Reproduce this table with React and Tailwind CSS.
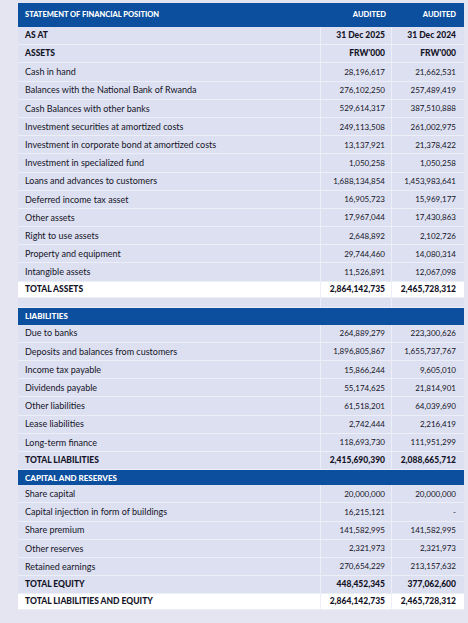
const assets = [
  ["Cash in hand", "28,196,617", "21,662,531"],
  ["Balances with the National Bank of Rwanda", "276,102,250", "257,489,419"],
  ["Cash Balances with other banks", "529,614,317", "387,510,888"],
  ["Investment securities at amortized costs", "249,113,508", "261,002,975"],
  ["Investment in corporate bond at amortized costs", "13,137,921", "21,378,422"],
  ["Investment in specialized fund", "1,050,258", "1,050,258"],
  ["Loans and advances to customers", "1,688,134,854", "1,453,983,641"],
  ["Deferred income tax asset", "16,905,723", "15,969,177"],
  ["Other assets", "17,967,044", "17,430,863"],
  ["Right to use assets", "2,648,892", "2,102,726"],
  ["Property and equipment", "29,744,460", "14,080,314"],
  ["Intangible assets", "11,526,891", "12,067,098"],
];

const liabilities = [
  ["Due to banks", "264,889,279", "223,300,626"],
  ["Deposits and balances from customers", "1,896,805,867", "1,655,737,767"],
  ["Income tax payable", "15,866,244", "9,605,010"],
  ["Dividends payable", "55,174,625", "21,814,901"],
  ["Other liabilities", "61,518,201", "64,039,690"],
  ["Lease liabilities", "2,742,444", "2,216,419"],
  ["Long-term finance", "118,693,730", "111,951,299"],
];

const capital = [
  ["Share capital", "20,000,000", "20,000,000"],
  ["Capital injection in form of buildings", "16,215,121", "-"],
  ["Share premium", "141,582,995", "141,582,995"],
  ["Other reserves", "2,321,973", "2,321,973"],
  ["Retained earnings", "270,654,229", "213,157,632"],
];

const cols = "grid grid-cols-[303px_71px_72px]";

function Row({ label, a, b, bold, white, h = "h-[18.2px]" }) {
  return (
    <div
      className={`${cols} ${h} ${white ? "bg-white" : ""} border-b border-[#eceef8] text-[#141428] ${bold ? "font-black text-[8.5px]" : "text-[8px]"}`}
    >
      <div className={`flex items-center pl-[7px] border-r border-[#eceef8] ${bold ? "" : "text-[9px]"}`}>{label}</div>
      <div className="flex items-center justify-end pr-[6px] border-r border-[#eceef8]">{a}</div>
      <div className="flex items-center justify-end pr-[8px]">{b}</div>
    </div>
  );
}

function SectionHead({ title, h }) {
  return (
    <div className={`${h} bg-[#0b4f9e] flex items-center pl-[7px] text-[8px] font-black text-white`}>
      {title}
    </div>
  );
}

export default function App() {
  return (
    <div
      className="min-h-[623px] w-[468px] bg-[#e4e5f1] pt-[3px] pl-[18px]"
      style={{ fontFamily: "Lato, 'Open Sans', sans-serif" }}
    >
      <div className="w-[446px] bg-[#dde0f0]">
        <div className={`${cols} h-[24px] bg-[#0b4f9e] text-[7.5px] font-black text-white`}>
          <div className="flex items-center pl-[7px]">STATEMENT OF FINANCIAL POSITION</div>
          <div className="flex items-center justify-end pr-[6px]">AUDITED</div>
          <div className="flex items-center justify-end pr-[8px]">AUDITED</div>
        </div>
        <Row label="AS AT" a="31 Dec 2025" b="31 Dec 2024" bold />
        <Row label="ASSETS" a="FRW'000" b="FRW'000" bold />
        {assets.map((r) => (
          <Row key={r[0]} label={r[0]} a={r[1]} b={r[2]} />
        ))}
        <Row label="TOTAL ASSETS" a="2,864,142,735" b="2,465,728,312" bold white h="h-[16px]" />
        <Row label="" a="" b="" h="h-[10px]" />
        <SectionHead title="LIABILITIES" h="h-[17px]" />
        {liabilities.map((r) => (
          <Row key={r[0]} label={r[0]} a={r[1]} b={r[2]} />
        ))}
        <Row label="TOTAL LIABILITIES" a="2,415,690,390" b="2,088,665,712" bold />
        <SectionHead title="CAPITAL AND RESERVES" h="h-[15px]" />
        {capital.map((r) => (
          <Row key={r[0]} label={r[0]} a={r[1]} b={r[2]} />
        ))}
        <Row label="TOTAL EQUITY" a="448,452,345" b="377,062,600" bold />
        <Row label="TOTAL LIABILITIES AND EQUITY" a="2,864,142,735" b="2,465,728,312" bold white h="h-[16px]" />
      </div>
    </div>
  );
}
